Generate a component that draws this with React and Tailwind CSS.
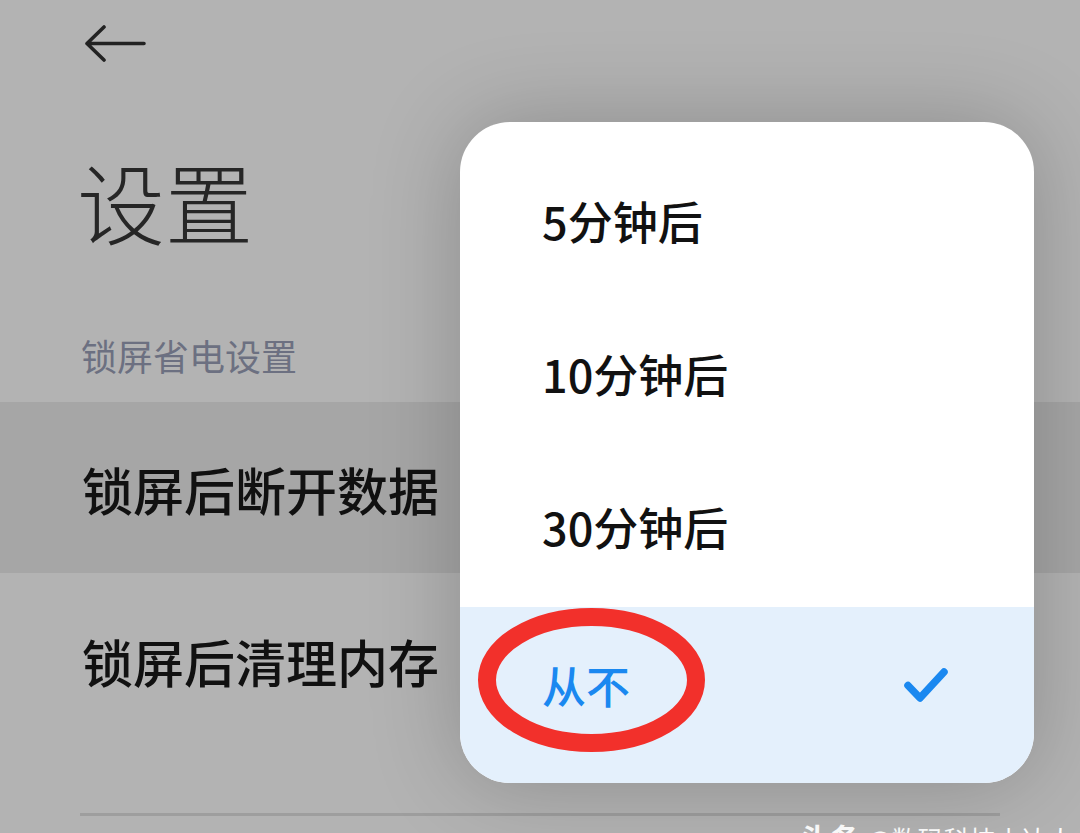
import React from "react";

const cjk = { fontFamily: '"Noto Sans CJK SC", "Noto Sans", sans-serif' };

export default function App() {
  return (
    <div
      className="relative w-[1080px] h-[833px] overflow-hidden bg-[#b3b3b3]"
      style={cjk}
    >
      {/* page content */}
      <div className="flex flex-col">
        <div className="h-[88px] pl-[84px] pt-[25px]">
          <svg width="62" height="40" viewBox="0 0 62 40" fill="none">
            <path
              d="M60 18.5H3M20 2L3 18.5L20 35"
              stroke="#222"
              strokeWidth="3.6"
              strokeLinecap="round"
              strokeLinejoin="round"
            />
          </svg>
        </div>
        <div className="h-[224px] flex items-center pl-[77px]">
          <span className="text-[88px] leading-none font-light text-[#262626]">
            设置
          </span>
        </div>
        <div className="h-[90px] flex items-center pl-[81px] pb-[4px]">
          <span className="text-[36px] leading-none text-[#6c7081]">
            锁屏省电设置
          </span>
        </div>
        <div className="h-[171px] flex items-center pl-[82px] bg-[#a6a6a6]">
          <span className="text-[51px] leading-none font-medium text-[#111] pt-[4px]">
            锁屏后断开数据
          </span>
        </div>
        <div className="h-[177px] flex items-center pl-[82px]">
          <span className="text-[51px] leading-none font-medium text-[#111]">
            锁屏后清理内存
          </span>
        </div>
        <div className="mt-[63px] mx-[80px] h-[3px] bg-[#9e9e9e]" />
      </div>

      {/* watermark, clipped at the bottom */}
      <div className="absolute left-[800px] top-[822px] text-[30px] font-bold leading-none text-white whitespace-nowrap">
        头条 <span className="text-[26px] font-normal">@数码科技小达人</span>
      </div>

      {/* popup */}
      <div className="absolute left-[460px] top-[122px] w-[574px] h-[661px] rounded-[50px] bg-white overflow-hidden shadow-[0_0_90px_rgba(0,0,0,0.22)] flex flex-col pt-[22px]">
        {["5分钟后", "10分钟后", "30分钟后"].map((t, i) => (
          <div
            key={t}
            className={
              i === 2
                ? "h-[157px] flex items-center pl-[82px] pb-[4px]"
                : "h-[153px] flex items-center pl-[82px]"
            }
          >
            <span className="text-[45px] leading-none font-medium text-[#111]">
              {t}
            </span>
          </div>
        ))}
        <div className="flex-1 bg-[#e4f0fc] flex items-center justify-between pl-[82px] pr-[86px] pb-[20px]">
          <span className="text-[44px] leading-none font-medium text-[#1a88f0]">
            从不
          </span>
          <svg width="44" height="36" viewBox="0 0 44 36" fill="none">
            <path
              d="M4 18.5L16 31L40 5"
              stroke="#1a88f0"
              strokeWidth="7.5"
              strokeLinecap="round"
              strokeLinejoin="round"
            />
          </svg>
        </div>
      </div>

      {/* red annotation ellipse */}
      <svg
        className="absolute left-0 top-0 pointer-events-none"
        width="1080"
        height="833"
        viewBox="0 0 1080 833"
        fill="none"
      >
        <ellipse
          cx="591.5"
          cy="680"
          rx="104.5"
          ry="63"
          stroke="#f2302b"
          strokeWidth="18"
        />
      </svg>
    </div>
  );
}
